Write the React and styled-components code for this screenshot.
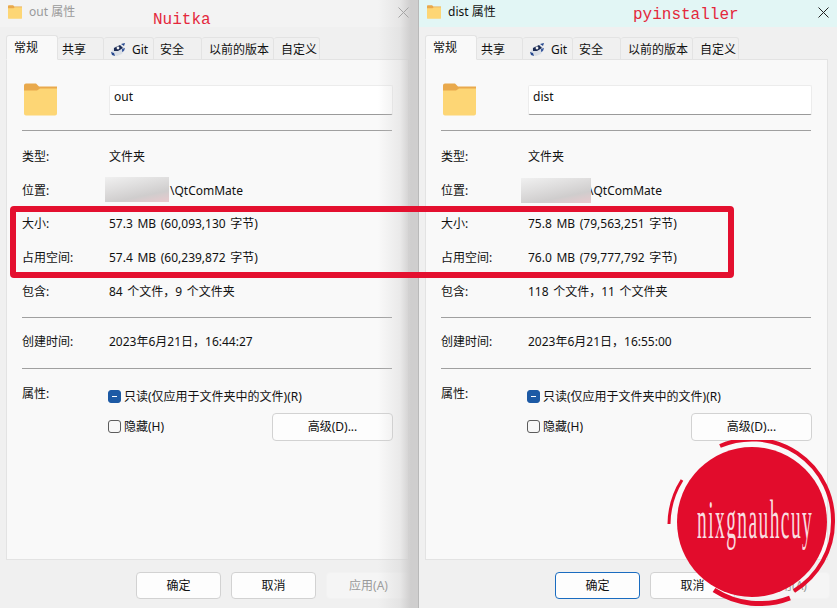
import React from 'react';
import styled, { createGlobalStyle } from 'styled-components';

const UI_FONT = `"Noto Sans", "Noto Sans CJK SC", sans-serif`;

const GlobalStyle = createGlobalStyle`
	html, body {
		margin: 0;
		padding: 0;
		background: #f0f0f0;
	}
`;

const Stage = styled.div`
	position: relative;
	display: flex;
	width: 837px;
	height: 608px;
	overflow: hidden;
	font: 12px/16px ${ UI_FONT };
	color: #111;
`;

const Dialog = styled.div`
	position: relative;
	display: flex;
	flex-direction: column;
	flex: none;
	box-sizing: border-box;
	width: ${ ( { $width } ) => $width }px;
	height: 608px;
	background: #f0f0f0;
	border-left: ${ ( { $active } ) => ( $active ? '1px solid #b9b9b9' : 'none' ) };

	${ ( { $active } ) => ! $active && `
		&::after {
			content: '';
			position: absolute;
			top: 0;
			right: 0;
			bottom: 0;
			width: 40px;
			background: linear-gradient(to right, rgba(205, 204, 204, 0), rgba(205, 204, 204, 0.35) 55%, #cfcece 82%);
			pointer-events: none;
		}
	` }
`;

const TitleBar = styled.div`
	display: flex;
	align-items: center;
	box-sizing: border-box;
	height: 27px;
	padding: 0 9px 3px 8px;
	background: ${ ( { $active } ) => ( $active ? '#e2f6f5' : '#f3f3f3' ) };
	color: ${ ( { $active } ) => ( $active ? '#111' : '#9a9a9a' ) };
`;

const TitleText = styled.span`
	margin-left: 7px;
	font-size: 12px;
	flex: 1;
`;

const CloseBox = styled.span`
	position: relative;
	z-index: 2;
	display: block;
	flex: none;
`;

const TabStrip = styled.div`
	display: flex;
	align-items: flex-end;
	height: 33px;
	padding-left: 6px;
	margin-bottom: -1px;
	position: relative;
	z-index: 1;
`;

const Tab = styled.div`
	display: flex;
	align-items: center;
	gap: 6px;
	box-sizing: border-box;
	width: ${ ( { $width } ) => $width }px;
	height: ${ ( { $selected } ) => ( $selected ? 25 : 23 ) }px;
	padding: ${ ( { $selected } ) => ( $selected ? '1px' : '3px' ) } 0 0 ${ ( { $pad } ) => $pad }px;
	background: ${ ( { $selected } ) => ( $selected ? '#f9f9f9' : '#f0f0f0' ) };
	border: 1px solid #e3e3e3;
	border-bottom: ${ ( { $selected } ) => ( $selected ? '1px solid #f9f9f9' : '1px solid #e3e3e3' ) };
	border-left: ${ ( { $selected } ) => ( $selected ? '1px solid #e3e3e3' : 'none' ) };
	border-radius: 3px 3px 0 0;
`;

const Panel = styled.div`
	box-sizing: border-box;
	width: 403px;
	height: 501px;
	margin-left: 6px;
	padding: 23px 15px 0 15px;
	background: #f9f9f9;
	border: 1px solid #e3e3e3;
`;

const NameRow = styled.div`
	display: flex;
	align-items: flex-start;
	height: 32px;
	margin-bottom: 15px;
`;

const IconCell = styled.div`
	width: 87px;
	padding-left: 2px;
	box-sizing: border-box;
	flex: none;
`;

const NameInput = styled.div`
	box-sizing: border-box;
	width: 285px;
	height: 30px;
	margin-top: 2px;
	padding: 3px 4px 0;
	background: #fff;
	border: 1px solid #ececec;
	border-bottom: 1px solid #9a9a9a;
	border-radius: 2px;
`;

const Separator = styled.div`
	width: 370px;
	height: 1px;
	background: #a0a0a0;
	margin-top: ${ ( { $top } ) => $top || 0 }px;
`;

const Group = styled.div`
	margin-top: ${ ( { $top } ) => $top }px;
`;

const Row = styled.div`
	display: flex;
	align-items: center;
	height: ${ ( { $height } ) => $height || 33.75 }px;
`;

const Label = styled.div`
	width: 87px;
	flex: none;
`;

const Value = styled.div`
	display: flex;
	align-items: center;
	white-space: pre;
	word-spacing: 1.5px;
`;

const Redacted = styled.span`
	position: relative;
	z-index: 1;
	display: block;
	flex: none;
	width: ${ ( { $width } ) => $width }px;
	height: 25px;
	margin: ${ ( { $margin } ) => $margin };
	background: linear-gradient(168deg, #f0f0f0 0%, #e0dfdf 35%, #cfcdcd 70%, #e9c9cd 100%);
`;

const Attributes = styled.div`
	display: grid;
	grid-template-columns: 87px 284px;
	margin-top: 16px;
`;

const AttrLabel = styled.div`
	padding-top: 1px;
`;

const CheckRow = styled.div`
	display: flex;
	align-items: center;
	justify-content: space-between;
	height: ${ ( { $height } ) => $height }px;
`;

const CheckItem = styled.div`
	display: flex;
	align-items: center;
	gap: 3px;
	margin-left: -1px;
`;

const CheckBox = styled.span`
	display: flex;
	align-items: center;
	justify-content: center;
	box-sizing: border-box;
	width: 13px;
	height: 13px;
	border-radius: 3px;
	background: ${ ( { $mixed } ) => ( $mixed ? '#1d5aa5' : '#f7f7f7' ) };
	border: 1px solid ${ ( { $mixed } ) => ( $mixed ? '#1d5aa5' : '#5c5c5c' ) };

	&::before {
		content: '';
		display: ${ ( { $mixed } ) => ( $mixed ? 'block' : 'none' ) };
		width: 5px;
		height: 1px;
		background: #fff;
	}
`;

const Button = styled.div`
	display: flex;
	align-items: center;
	justify-content: center;
	box-sizing: border-box;
	width: ${ ( { $width } ) => $width || 85 }px;
	height: ${ ( { $height } ) => $height || 27 }px;
	background: ${ ( { $disabled } ) => ( $disabled ? '#f5f5f5' : '#fdfdfd' ) };
	color: ${ ( { $disabled } ) => ( $disabled ? '#9a9a9a' : '#111' ) };
	border: 1px solid ${ ( { $disabled, $primary } ) => {
		if ( $primary ) {
			return '#1a6cc0';
		}
		return $disabled ? '#f2f2f2' : '#d2d2d2';
	} };
	border-radius: 4px;
`;

const ButtonBar = styled.div`
	display: flex;
	gap: 10px;
	margin: 12px 0 0 136px;
`;

// Annotations pasted on top of the screenshot
const Highlight = styled.div`
	position: absolute;
	left: 10px;
	top: 206px;
	width: 724px;
	height: 72px;
	box-sizing: border-box;
	border: 6px solid #e4102f;
	border-radius: 4px;
	pointer-events: none;
`;

const Caption = styled.div`
	position: absolute;
	left: ${ ( { $left } ) => $left }px;
	top: ${ ( { $top } ) => $top }px;
	font: 16px/20px "Liberation Mono", monospace;
	color: #e4283c;
`;

const Stamp = styled.div`
	position: absolute;
	left: 666px;
	top: 440px;
	width: 171px;
	height: 168px;
`;

const StampText = styled.div`
	position: absolute;
	left: 31px;
	top: 50px;
	font: 54px/60px "Liberation Serif", serif;
	letter-spacing: 4px;
	color: #f9dde0;
	white-space: nowrap;
	transform: scaleX(0.36);
	transform-origin: left center;
`;

function FolderIcon( { size } ) {
	return (
		<svg width={ size } height={ size } viewBox="0 0 33 32" style={ { display: 'block', flex: 'none' } }>
			<path d="M0 2a2 2 0 0 1 2-2h10l3 3h18v6H0z" fill="#e9a94c" />
			<path d="M0 7h13l3-2h17v25a2 2 0 0 1-2 2H2a2 2 0 0 1-2-2z" fill="#fdd675" />
		</svg>
	);
}

function GitIcon() {
	return (
		<svg width="16" height="14" viewBox="0 0 16 14" style={ { display: 'block', flex: 'none' } }>
			<path d="M1 9l3-5 7-2 4 3-3 6-5 2-4-1z" fill="#d9dee6" />
			<path d="M4 5l6-3 3 3-5 3-4 0z" fill="#1b2a52" />
			<path d="M1 9l3 1 1 3-3-1zM11 1l4-1-1 3z" fill="#27498f" />
			<circle cx="8" cy="5" r="1.4" fill="#f1f1f1" />
			<path d="M12 6l3-1-1 3-2 1z" fill="#3b5a9e" />
		</svg>
	);
}

function CloseIcon( { color } ) {
	return (
		<CloseBox>
			<svg width="11" height="11" viewBox="0 0 11 11" style={ { display: 'block' } }>
				<path d="M.5.5l10 10M10.5.5l-10 10" stroke={ color } strokeWidth="1" fill="none" />
			</svg>
		</CloseBox>
	);
}

function PropertiesDialog( { data } ) {
	const { active } = data;
	return (
		<Dialog $active={ active } $width={ active ? 420 : 418 }>
			<TitleBar $active={ active }>
				<FolderIcon size={ 14 } />
				<TitleText>{ data.name } 属性</TitleText>
				<CloseIcon color={ active ? '#222' : '#a5a5a5' } />
			</TitleBar>
			<TabStrip>
				<Tab $selected $width={ 52 } $pad={ 7 }>常规</Tab>
				<Tab $width={ 46 } $pad={ 4 }>共享</Tab>
				<Tab $width={ 50 } $pad={ 6 }><GitIcon />Git</Tab>
				<Tab $width={ 48 } $pad={ 6 }>安全</Tab>
				<Tab $width={ 72 } $pad={ 7 }>以前的版本</Tab>
				<Tab $width={ 46 } $pad={ 7 }>自定义</Tab>
			</TabStrip>
			<Panel>
				<NameRow>
					<IconCell><FolderIcon size={ 33 } /></IconCell>
					<NameInput>{ data.name }</NameInput>
				</NameRow>
				<Separator />
				<Group $top={ 9 }>
					<Row><Label>类型:</Label><Value>文件夹</Value></Row>
					<Row>
						<Label>位置:</Label>
						<Value>
							<Redacted $width={ data.redact.width } $margin={ data.redact.margin } />
							<span style={ { marginLeft: data.redact.gap } }>\QtComMate</span>
						</Value>
					</Row>
					<Row><Label>大小:</Label><Value>{ data.size }</Value></Row>
					<Row><Label>占用空间:</Label><Value>{ data.disk }</Value></Row>
					<Row><Label>包含:</Label><Value>{ data.contains }</Value></Row>
				</Group>
				<Separator $top={ 8 } />
				<Group $top={ 7 }>
					<Row $height={ 34 }><Label>创建时间:</Label><Value>{ data.created }</Value></Row>
				</Group>
				<Separator $top={ 9 } />
				<Attributes>
					<AttrLabel>属性:</AttrLabel>
					<div>
						<CheckRow $height={ 24 }>
							<CheckItem><CheckBox $mixed />只读(仅应用于文件夹中的文件)(R)</CheckItem>
						</CheckRow>
						<CheckRow $height={ 36 }>
							<CheckItem><CheckBox />隐藏(H)</CheckItem>
							<Button $width={ 121 } $height={ 28 }>高级(D)...</Button>
						</CheckRow>
					</div>
				</Attributes>
			</Panel>
			<ButtonBar>
				<Button $primary={ active }>确定</Button>
				<Button>取消</Button>
				<Button $disabled>应用(A)</Button>
			</ButtonBar>
		</Dialog>
	);
}

const DIALOGS = [
	{
		name: 'out',
		active: false,
		size: '57.3 MB (60,093,130 字节)',
		disk: '57.4 MB (60,239,872 字节)',
		contains: '84 个文件，9 个文件夹',
		created: '2023年6月21日，16:44:27',
		redact: { width: 64, margin: '-3px 0 0 -4px', gap: 1 },
	},
	{
		name: 'dist',
		active: true,
		size: '75.8 MB (79,563,251 字节)',
		disk: '76.0 MB (79,777,792 字节)',
		contains: '118 个文件，11 个文件夹',
		created: '2023年6月21日，16:55:00',
		redact: { width: 70, margin: '0 0 0 -7px', gap: -2 },
	},
];

export default function App() {
	return (
		<Stage>
			<GlobalStyle />
			{ DIALOGS.map( ( dialog ) => <PropertiesDialog key={ dialog.name } data={ dialog } /> ) }
			<Highlight />
			<Caption $left={ 153 } $top={ 10 }>Nuitka</Caption>
			<Caption $left={ 633 } $top={ 5 }>pyinstaller</Caption>
			<Stamp>
				<svg width="171" height="168" viewBox="0 0 171 168" style={ { display: 'block' } }>
					<circle cx="86" cy="82" r="75" fill="#e20c2c" />
					<path d="M54 6A81 81 0 0 1 167 82A81 81 0 0 1 128 151" fill="none" stroke="#e20c2c" strokeWidth="4" />
					<path d="M48 150A84 84 0 0 0 124 158" fill="none" stroke="#e20c2c" strokeWidth="5" />
					<path d="M3 84A84 84 0 0 1 16 40" fill="none" stroke="#e20c2c" strokeWidth="3" />
				</svg>
				<StampText>nixgnauhcuy</StampText>
			</Stamp>
		</Stage>
	);
}
